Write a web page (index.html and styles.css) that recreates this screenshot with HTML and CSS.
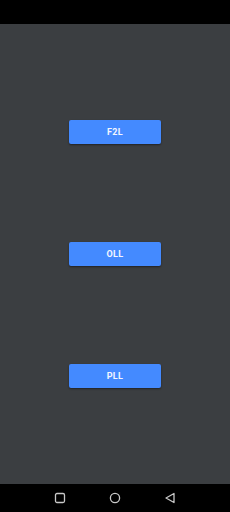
FILE: index.html
```html
<!DOCTYPE html>
<html lang="en">
<head>
    <meta charset="UTF-8">
    <meta name="viewport" content="width=device-width, initial-scale=1.0">
    <title>Cube Algorithms</title>
    <link rel="stylesheet" href="styles.css">
</head>
<body>
    <div class="status-bar"></div>

    <div class="main">
        <button class="menu-btn">F2L</button>
        <button class="menu-btn">OLL</button>
        <button class="menu-btn">PLL</button>
    </div>

    <div class="nav-bar">
        <svg class="nav-icon" viewBox="0 0 12 12">
            <rect x="1.5" y="1.5" width="9" height="9" rx="1.5"></rect>
        </svg>
        <svg class="nav-icon" viewBox="0 0 12 12">
            <circle cx="6" cy="6" r="4.6"></circle>
        </svg>
        <svg class="nav-icon" viewBox="0 0 12 12">
            <path d="M10 1.5 L10 10.5 L2 6 Z"></path>
        </svg>
    </div>
</body>
</html>
```

FILE: styles.css
```css
body {
    margin: 0;
    width: 230px;
    height: 512px;
    display: flex;
    flex-direction: column;
    background-color: #000;
    font-family: Roboto, "Liberation Sans", Arial, sans-serif;
}

.status-bar {
    height: 24px;
    background-color: #000;
}

.main {
    height: 460px;
    background-color: #3b3e41;
    display: flex;
    flex-direction: column;
    align-items: center;
    padding-top: 96px;
    gap: 98px;
    box-sizing: border-box;
}

.menu-btn {
    width: 92px;
    height: 24px;
    border: none;
    border-radius: 2px;
    background-color: #448aff;
    color: #f2f6ff;
    font-family: Roboto, "Liberation Sans", Arial, sans-serif;
    font-size: 9px;
    font-weight: bold;
    letter-spacing: 0.4px;
    box-shadow: 0 1px 2px rgba(0, 0, 0, 0.45);
    padding: 0;
    cursor: pointer;
}

.nav-bar {
    height: 28px;
    background-color: #000;
    display: flex;
    justify-content: center;
    align-items: center;
    gap: 43px;
}

.nav-icon {
    width: 12px;
    height: 12px;
    fill: none;
    stroke: #c8c8c8;
    stroke-width: 1.3;
    stroke-linejoin: round;
}
```
